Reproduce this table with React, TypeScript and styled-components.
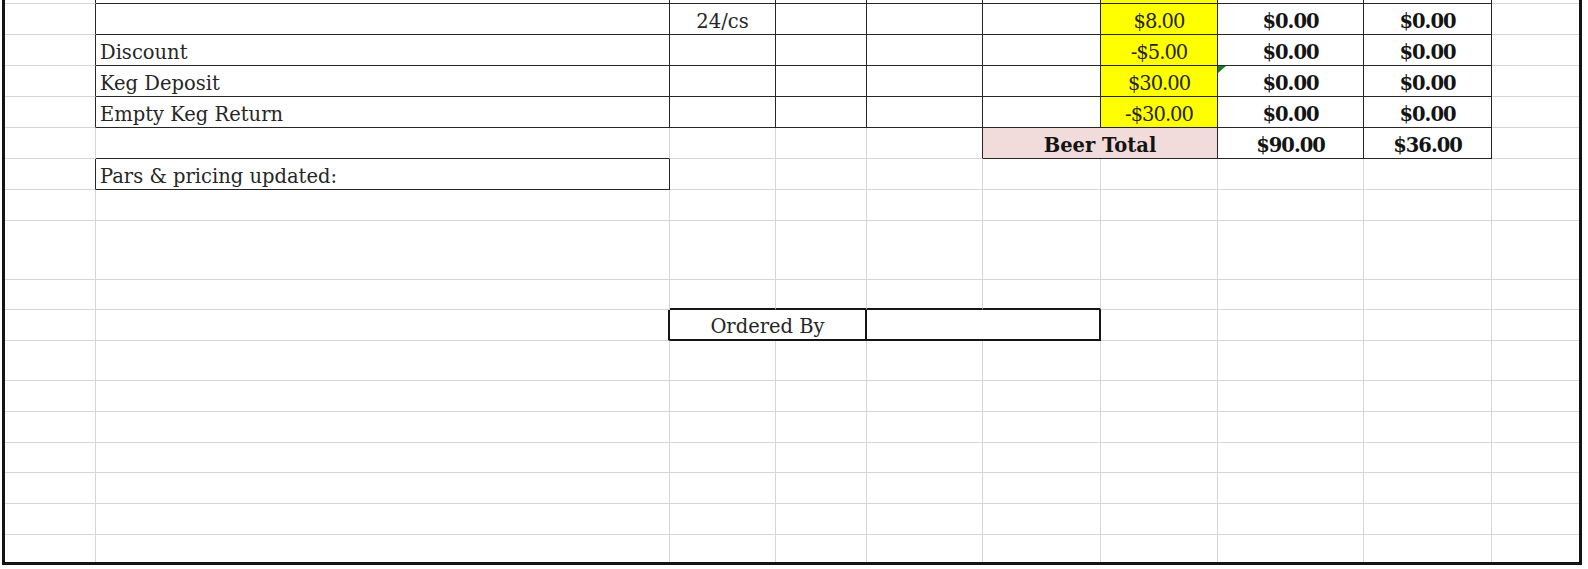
import styled, { createGlobalStyle } from "styled-components";

type Line = "grid" | "thin" | "thick" | "none";

interface CellSpec {
  text?: string;
  span?: number;
  r?: Line;
  b?: Line;
  fill?: "yellow" | "pink";
  align?: "left" | "center";
  bold?: boolean;
  num?: boolean;
  flag?: boolean;
}

const COLUMNS = [91, 574, 106, 91, 116, 118, 117, 146, 128];
const ROW_HEIGHTS = [4, 31, 31, 31, 31, 31, 31, 31, 59, 30, 31, 40, 31, 31, 30, 31, 31];
const COLUMN_COUNT = COLUMNS.length + 1;

const GlobalStyle = createGlobalStyle`
  html, body {
    margin: 0;
    padding: 0;
    background: #ffffff;
  }
  body {
    font-family: "DejaVu Serif", "Liberation Serif", serif;
  }
`;

const lines: Record<Line, string> = {
  grid: "1px solid #d6d6d6",
  thin: "1px solid #262626",
  thick: "2px solid #161616",
  none: "0",
};

const fills = {
  yellow: "#ffff00",
  pink: "#f2dcdb",
};

const Frame = styled.div`
  box-sizing: border-box;
  width: 1580px;
  height: 565px;
  margin-left: 2px;
  border: 3px solid #141414;
  border-top: 0;
  background: #ffffff;
`;

const Sheet = styled.div`
  display: grid;
  grid-template-columns: ${COLUMNS.map((w) => `${w}px`).join(" ")} 1fr;
  grid-template-rows: ${ROW_HEIGHTS.map((h) => `${h}px`).join(" ")} 1fr;
  height: 100%;
`;

const Cell = styled.div<{
  $r: Line;
  $b: Line;
  $span: number;
  $fill?: "yellow" | "pink";
  $align: "left" | "center";
  $bold?: boolean;
  $num?: boolean;
}>`
  position: relative;
  box-sizing: border-box;
  grid-column: span ${(p) => p.$span};
  display: flex;
  align-items: flex-end;
  justify-content: ${(p) => (p.$align === "center" ? "center" : "flex-start")};
  min-width: 0;
  padding: 0 0 1px ${(p) => (p.$align === "left" ? 4 : 0)}px;
  border-right: ${(p) => lines[p.$r]};
  border-bottom: ${(p) => lines[p.$b]};
  background: ${(p) => (p.$fill ? fills[p.$fill] : "transparent")};
  color: ${(p) => (p.$bold ? "#141414" : "#262626")};
  font-size: 19.5px;
  line-height: 23px;
  font-weight: ${(p) => (p.$bold ? 700 : 400)};
  letter-spacing: ${(p) => (p.$num ? "-1px" : "normal")};
  white-space: nowrap;
  overflow: hidden;
`;

const ErrorFlag = styled.span`
  position: absolute;
  top: 0;
  left: 0;
  width: 0;
  height: 0;
  border-top: 7px solid #1d7a2e;
  border-right: 8px solid transparent;
`;

const T: Line = "thin";
const K: Line = "thick";

const blank = (): CellSpec[] => Array.from({ length: COLUMN_COUNT }, () => ({}));

const money = (text: string, bold = false): CellSpec => ({
  text,
  num: true,
  bold,
  align: "center",
  r: T,
  b: T,
});

const itemRow = (
  label = "",
  unit = "",
  price = "",
  subtotal = "",
  total = "",
  flag = false
): CellSpec[] => [
  { r: T },
  { text: label, r: T, b: T },
  { text: unit, align: "center", r: T, b: T },
  { r: T, b: T },
  { r: T, b: T },
  { r: T, b: T },
  { ...money(price), fill: "yellow" },
  { ...money(subtotal, true), flag },
  money(total, true),
  {},
];

const rows: CellSpec[][] = [
  itemRow(),
  itemRow("", "24/cs", "$8.00", "$0.00", "$0.00"),
  itemRow("Discount", "", "-$5.00", "$0.00", "$0.00"),
  itemRow("Keg Deposit", "", "$30.00", "$0.00", "$0.00", true),
  itemRow("Empty Keg Return", "", "-$30.00", "$0.00", "$0.00"),
  [
    {},
    { b: T },
    {},
    {},
    { r: T },
    { text: "Beer Total", span: 2, bold: true, align: "center", fill: "pink", r: T, b: T },
    money("$90.00", true),
    money("$36.00", true),
    {},
  ],
  [{ r: T }, { text: "Pars & pricing updated:", r: T, b: T }, {}, {}, {}, {}, {}, {}, {}, {}],
  blank(),
  blank(),
  [{}, {}, { b: K }, { b: K }, { b: K }, { b: K }, {}, {}, {}, {}],
  [
    {},
    { r: K },
    { text: "Ordered By", span: 2, align: "center", r: K, b: K },
    { span: 2, r: K, b: K },
    {},
    {},
    {},
    {},
  ],
  blank(),
  blank(),
  blank(),
  blank(),
  blank(),
  blank(),
  blank(),
];

const App = () => {
  return (
    <>
      <GlobalStyle />
      <Frame>
        <Sheet>
          {rows.map((row, ri) => {
            let col = 0;
            const lastRow = ri === rows.length - 1;
            return row.map((cell, ci) => {
              const span = cell.span ?? 1;
              col += span;
              const lastCol = col === COLUMN_COUNT;
              return (
                <Cell
                  key={`${ri}-${ci}`}
                  $span={span}
                  $r={cell.r ?? (lastCol ? "none" : "grid")}
                  $b={cell.b ?? (lastRow ? "none" : "grid")}
                  $fill={cell.fill}
                  $align={cell.align ?? "left"}
                  $bold={cell.bold}
                  $num={cell.num}
                >
                  {cell.flag && <ErrorFlag />}
                  {cell.text}
                </Cell>
              );
            });
          })}
        </Sheet>
      </Frame>
    </>
  );
};

export default App;
